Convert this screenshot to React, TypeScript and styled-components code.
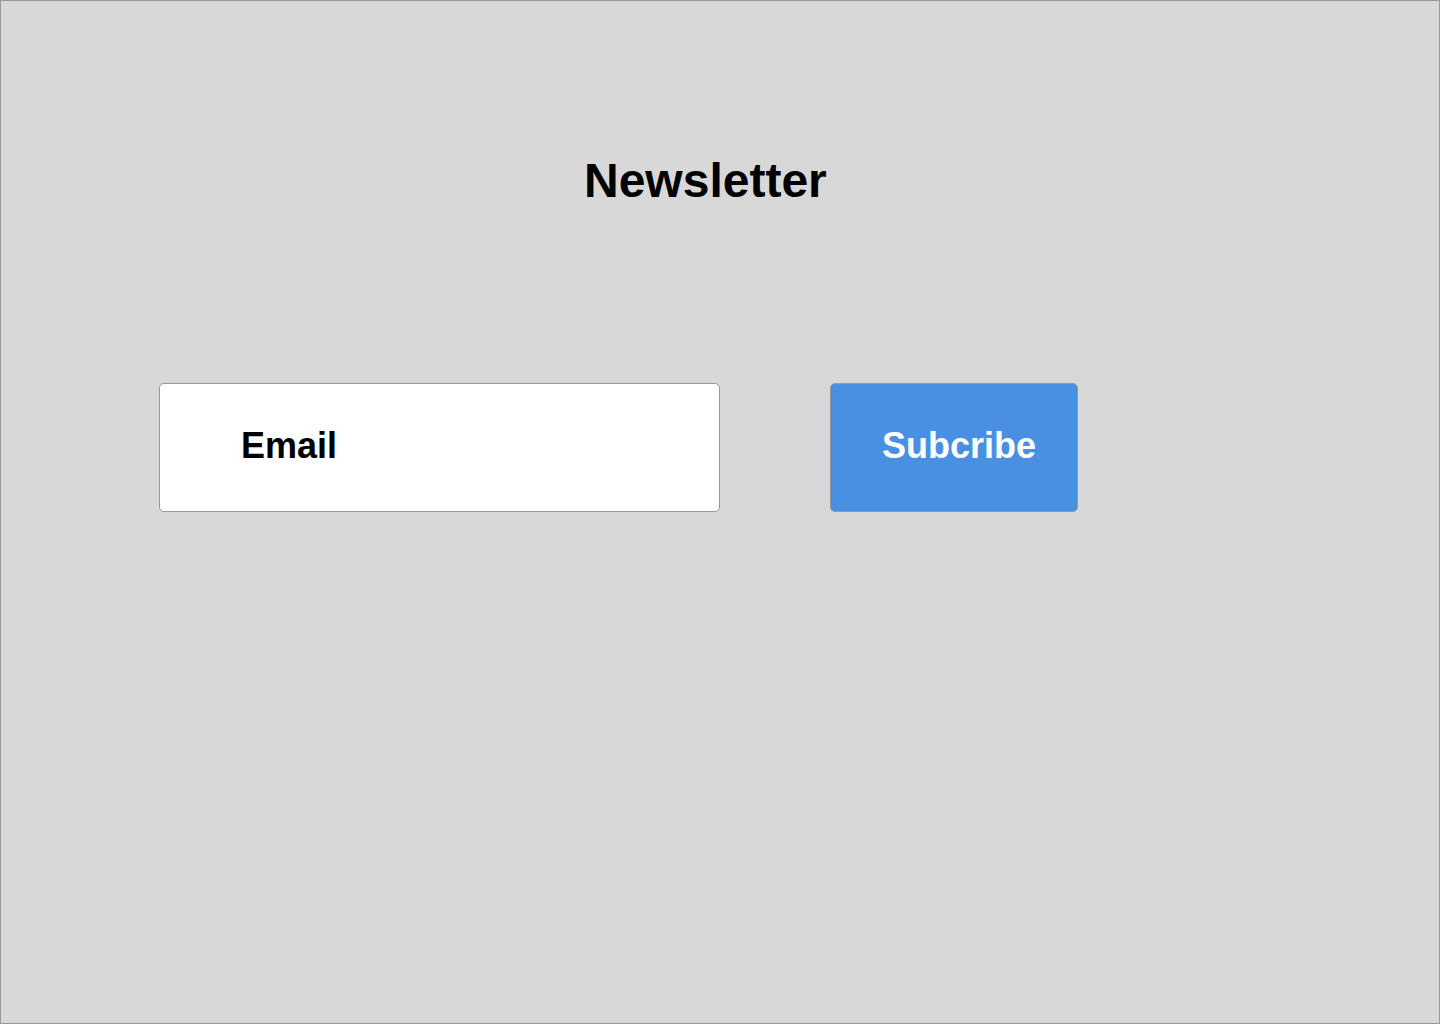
import styled, { createGlobalStyle } from "styled-components";

const GlobalStyle = createGlobalStyle`
  html, body {
    margin: 0;
    padding: 0;
  }
  body {
    font-family: "Liberation Sans", Arial, sans-serif;
    background: #d8d8d8;
  }
`;

const Page = styled.div`
  box-sizing: border-box;
  width: 1440px;
  height: 1024px;
  background: #d8d8d8;
  border: 1px solid #979797;
  display: flex;
  flex-direction: column;
`;

const Title = styled.h1`
  margin: 156px 0 0 0;
  padding-left: 583px;
  font-size: 48px;
  line-height: 48px;
  font-weight: 700;
  color: #000;
`;

const Form = styled.form`
  display: flex;
  align-items: stretch;
  gap: 110px;
  margin-top: 178px;
  padding-left: 158px;
`;

const EmailInput = styled.input`
  box-sizing: border-box;
  width: 561px;
  height: 129px;
  margin: 0;
  padding: 0 0 3px 81px;
  background: #fff;
  border: 1px solid #979797;
  border-radius: 5px;
  font-family: "Liberation Sans", Arial, sans-serif;
  font-size: 36px;
  font-weight: 700;
  color: #000;
  outline: none;

  &::placeholder {
    color: #000;
    opacity: 1;
  }
`;

const SubscribeButton = styled.button`
  box-sizing: border-box;
  width: 248px;
  height: 129px;
  margin: 0;
  padding: 0 0 4px 51px;
  text-align: left;
  background: #4a90e2;
  border: 1px solid #979797;
  border-radius: 5px;
  font-family: "Liberation Sans", Arial, sans-serif;
  font-size: 36px;
  font-weight: 700;
  color: #fff;
  cursor: pointer;
`;

export default function App() {
  return (
    <>
      <GlobalStyle />
      <Page>
        <Title>Newsletter</Title>
        <Form onSubmit={(e) => e.preventDefault()}>
          <EmailInput type="email" placeholder="Email" />
          <SubscribeButton type="submit">Subcribe</SubscribeButton>
        </Form>
      </Page>
    </>
  );
}
